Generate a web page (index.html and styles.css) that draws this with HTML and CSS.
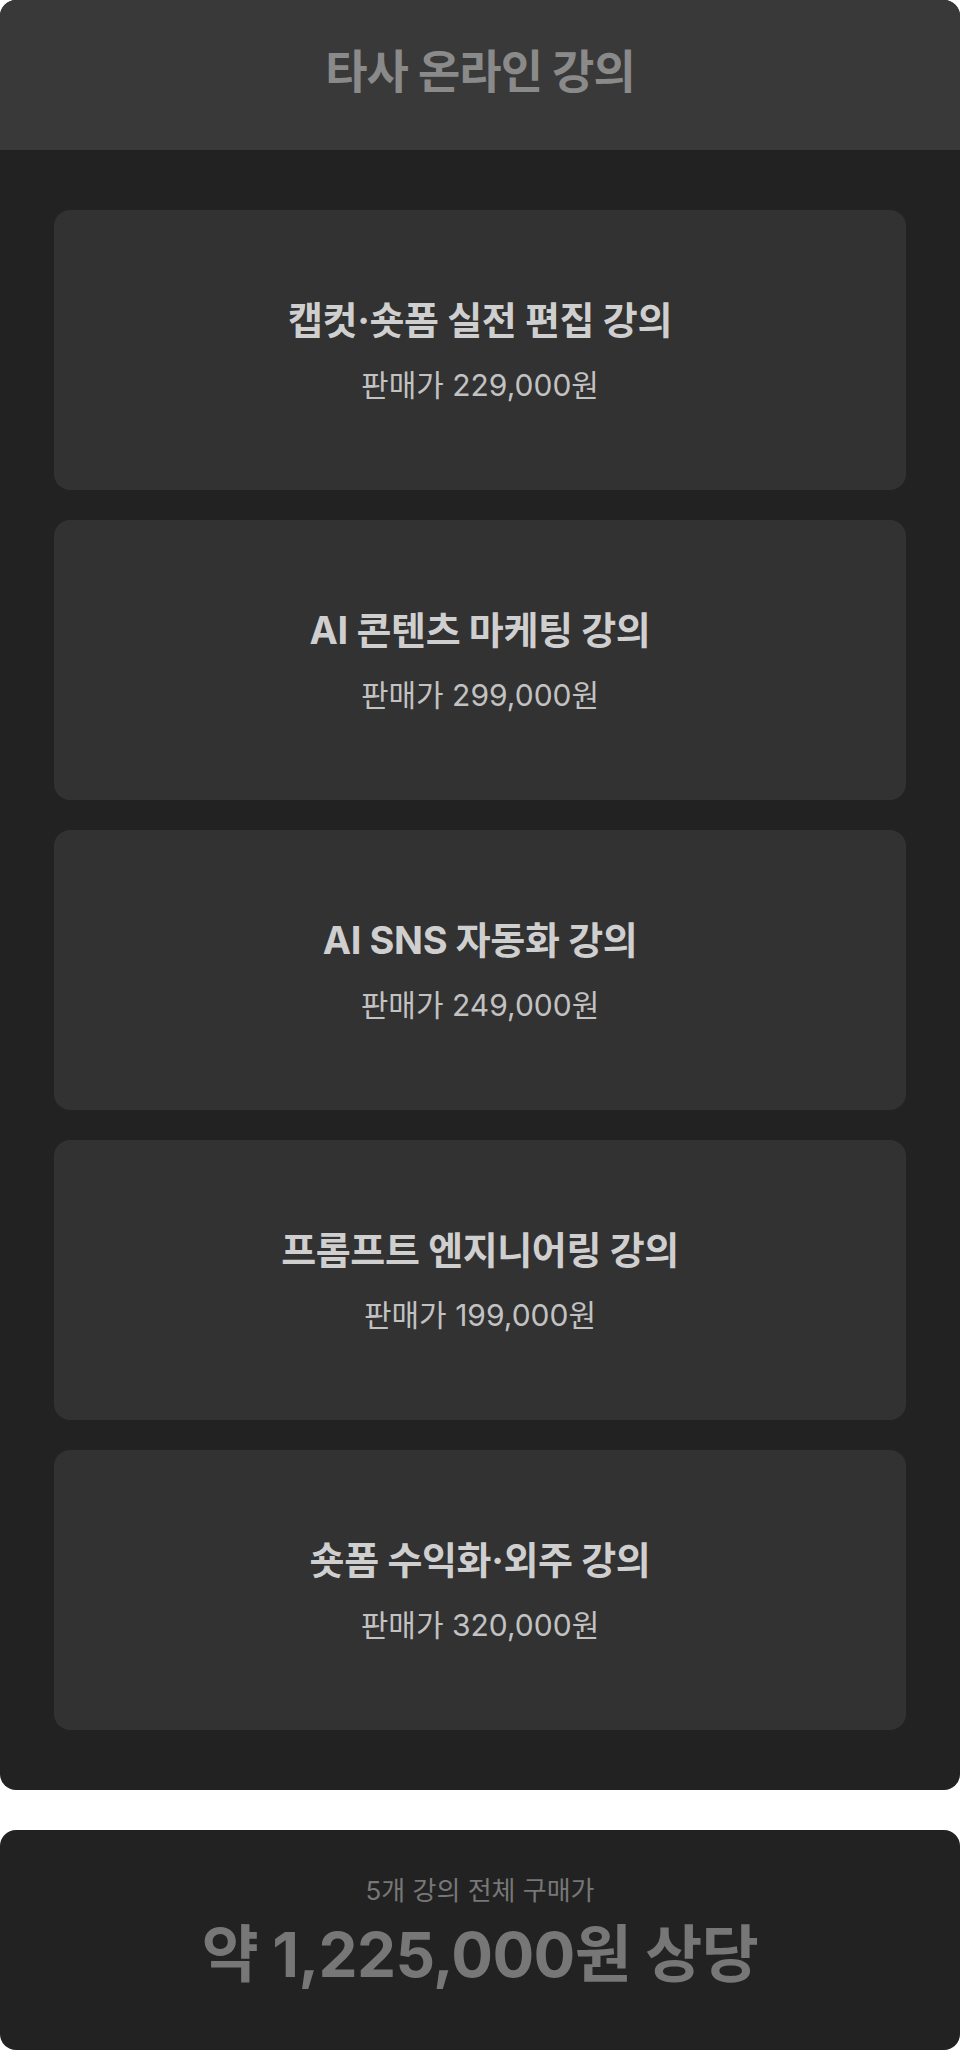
FILE: index.html
```html
<!DOCTYPE html>
<html lang="ko">
<head>
    <meta charset="UTF-8">
    <meta name="viewport" content="width=device-width, initial-scale=1.0">
    <title>타사 온라인 강의</title>
    <link rel="stylesheet" href="styles.css">
</head>
<body>
    <section class="compare-box">
        <h2 class="compare-title">타사 온라인 강의</h2>

        <div class="course-list">
            <div class="course-card">
                <p class="course-name">캡컷·숏폼 실전 편집 강의</p>
                <p class="course-price">판매가 229,000원</p>
            </div>
            <div class="course-card">
                <p class="course-name">AI 콘텐츠 마케팅 강의</p>
                <p class="course-price">판매가 299,000원</p>
            </div>
            <div class="course-card">
                <p class="course-name">AI SNS 자동화 강의</p>
                <p class="course-price">판매가 249,000원</p>
            </div>
            <div class="course-card">
                <p class="course-name">프롬프트 엔지니어링 강의</p>
                <p class="course-price">판매가 199,000원</p>
            </div>
            <div class="course-card">
                <p class="course-name">숏폼 수익화·외주 강의</p>
                <p class="course-price">판매가 320,000원</p>
            </div>
        </div>
    </section>

    <section class="total-box">
        <p class="total-label">5개 강의 전체 구매가</p>
        <p class="total-value">약 1,225,000원 상당</p>
    </section>
</body>
</html>
```

FILE: styles.css
```css
body {
    font-family: Inter, "Noto Sans CJK KR", sans-serif;
    margin: 0;
    padding: 0 0 12px;
    background-color: #fff;
}

p, h2 {
    margin: 0;
}

.compare-box {
    background-color: #222;
    border-radius: 16px;
    overflow: hidden;
}

.compare-title {
    height: 150px;
    box-sizing: border-box;
    padding-bottom: 14px;
    display: flex;
    align-items: center;
    justify-content: center;
    background-color: #393939;
    color: #8a8a8a;
    font-size: 46px;
    font-weight: 700;
    letter-spacing: -0.02em;
}

.course-list {
    display: flex;
    flex-direction: column;
    gap: 30px;
    padding: 60px 54px;
}

.course-card {
    height: 280px;
    display: flex;
    flex-direction: column;
    align-items: center;
    justify-content: center;
    gap: 16px;
    background-color: #323232;
    border-radius: 16px;
}

.course-name {
    color: #cfcfcf;
    font-size: 38px;
    font-weight: 700;
    line-height: 1.4;
    letter-spacing: -0.01em;
}

.course-price {
    color: #c2c2c2;
    font-size: 30px;
    line-height: 1.4;
}

.total-box {
    margin-top: 40px;
    height: 220px;
    box-sizing: border-box;
    padding-bottom: 12px;
    display: flex;
    flex-direction: column;
    align-items: center;
    justify-content: center;
    gap: 6px;
    background-color: #222;
    border-radius: 16px;
}

.total-label {
    color: #777;
    font-size: 26px;
    line-height: 1.4;
}

.total-value {
    color: #777;
    font-size: 62px;
    font-weight: 700;
    line-height: 1.3;
    letter-spacing: -0.01em;
}
```
